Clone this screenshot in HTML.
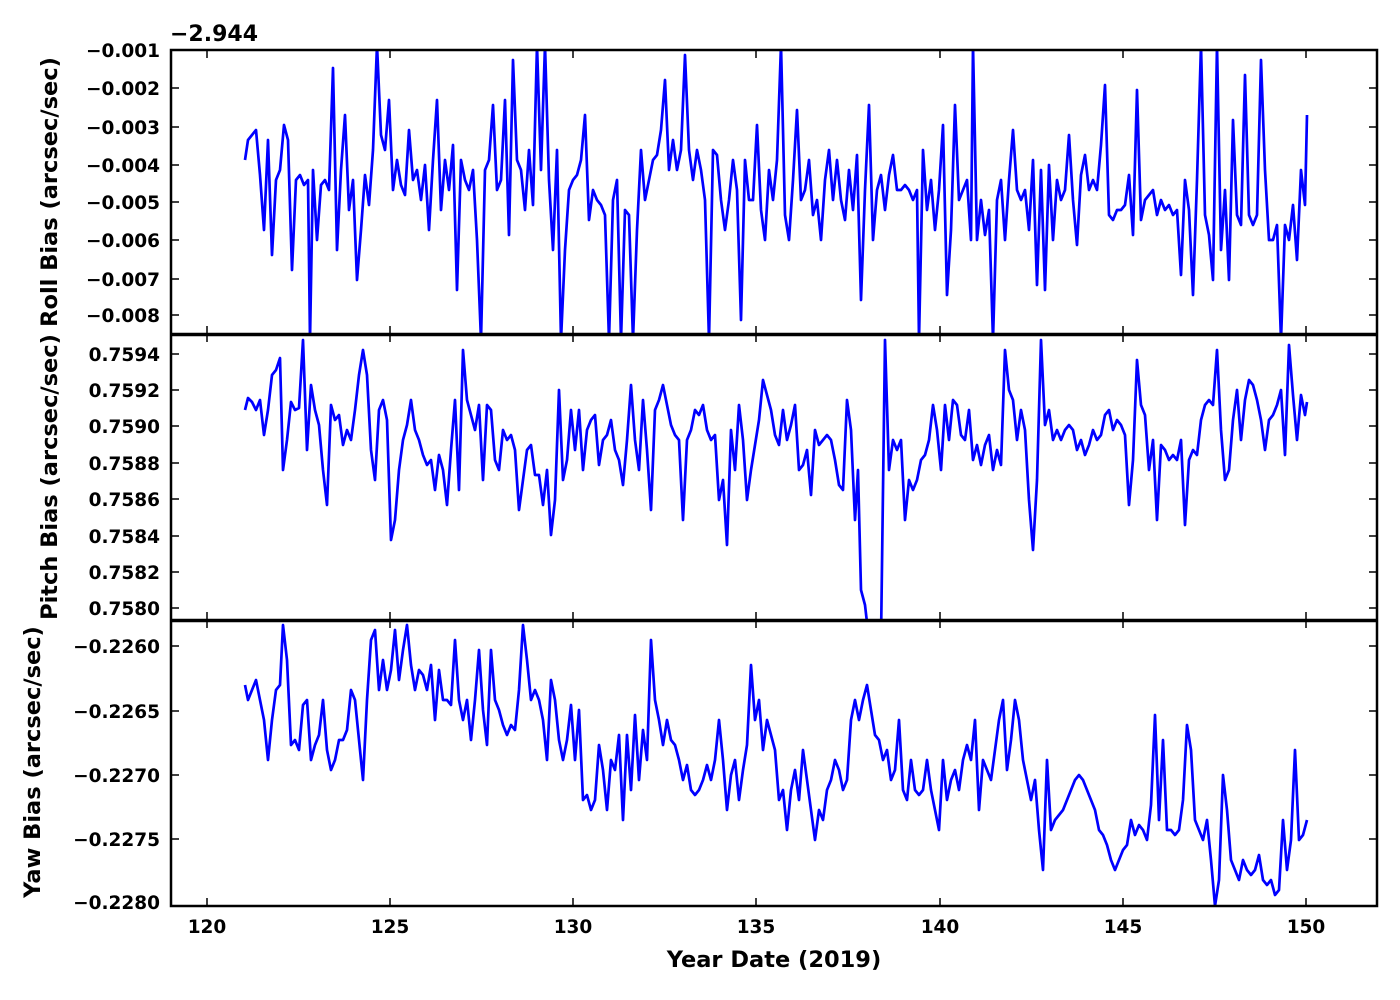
<!DOCTYPE html>
<html><head><meta charset="utf-8"><style>
html,body{margin:0;padding:0;background:#fff;}
svg{display:block;}
text{font-family:"DejaVu Sans","Liberation Sans",sans-serif;font-weight:bold;font-size:18.5px;fill:#000;}
.yl{text-anchor:end;}
.lab{font-size:22.5px;}
</style></head><body>
<svg width="1400" height="1000" viewBox="0 0 1400 1000">
<defs>
<clipPath id="c1"><rect x="171" y="50" width="1206" height="284"/></clipPath>
<clipPath id="c2"><rect x="171" y="335" width="1206" height="285"/></clipPath>
<clipPath id="c3"><rect x="171" y="621" width="1206" height="285"/></clipPath>
</defs>
<g fill="none" stroke="#0000ff" stroke-width="2.7" stroke-linejoin="round">
<polyline clip-path="url(#c1)" points="245,160 248,140 252,135 256,130 260,175 264,230 268,140 272,255 276,180 280,170 284,125 288,140 292,270 296,180 300,175 304,185 308,180 310,340 313,170 317,240 321,185 325,180 329,190 333,68 337,250 341,170 345,115 349,210 353,180 357,280 361,230 365,175 369,205 373,150 377,45 381,135 385,150 389,100 393,190 397,160 401,185 405,195 409,130 413,180 417,170 421,200 425,165 429,230 433,160 437,100 441,210 445,160 449,190 453,145 457,290 461,160 465,180 469,190 473,170 477,240 481,340 485,170 489,160 493,105 497,190 501,180 505,100 509,235 513,60 517,160 521,170 525,210 529,150 533,205 537,45 541,170 545,45 549,180 553,250 557,150 561,340 565,250 569,190 573,180 577,175 581,160 585,115 589,220 593,190 597,200 601,205 605,215 609,340 613,200 617,180 621,340 625,210 629,215 633,340 637,230 641,150 645,200 649,180 653,160 657,155 661,130 665,80 669,170 673,140 677,170 681,150 685,55 689,150 693,180 697,150 701,170 705,200 709,340 713,150 717,155 721,200 725,230 729,200 733,160 737,190 741,320 745,160 749,200 753,200 757,125 761,210 765,240 769,170 773,200 777,160 781,45 785,215 789,240 793,180 797,110 801,200 805,190 809,160 813,215 817,200 821,240 825,180 829,150 833,200 837,160 841,200 845,220 849,170 853,210 857,155 861,300 865,190 869,105 873,240 877,190 881,175 885,210 889,175 893,155 897,190 901,190 905,185 909,190 913,200 917,190 919,340 923,150 927,210 931,180 935,230 939,190 943,125 947,295 951,230 955,105 959,200 963,190 967,180 971,240 973,45 977,240 981,200 985,235 989,210 993,340 997,200 1001,180 1005,240 1009,180 1013,130 1017,190 1021,200 1025,190 1029,230 1033,160 1037,285 1041,170 1045,290 1049,165 1053,240 1057,180 1061,200 1065,190 1069,135 1073,200 1077,245 1081,175 1085,155 1089,190 1093,180 1097,190 1101,145 1105,85 1109,215 1113,220 1117,210 1121,210 1125,205 1129,175 1133,235 1137,90 1141,220 1145,200 1149,195 1153,190 1157,215 1161,200 1165,210 1169,205 1173,215 1177,210 1181,275 1185,180 1189,210 1193,295 1197,180 1201,45 1205,215 1209,235 1213,280 1217,45 1221,250 1225,190 1229,280 1233,120 1237,215 1241,225 1245,75 1249,215 1253,225 1257,215 1261,60 1265,170 1269,240 1273,240 1277,225 1281,340 1285,225 1289,240 1293,205 1297,260 1301,170 1305,205 1307,115"/>
<polyline clip-path="url(#c2)" points="245,410 248,398 252,402 256,410 260,400 264,435 268,410 272,375 276,370 280,358 283,470 287,440 291,402 295,410 299,408 303,340 307,450 311,385 315,410 319,425 323,470 327,505 331,405 335,420 339,415 343,445 347,430 351,440 355,410 359,375 363,350 367,375 371,450 375,480 379,410 383,400 387,420 391,540 395,520 399,470 403,440 407,425 411,400 415,430 419,440 423,455 427,465 431,460 435,490 439,455 443,470 447,505 451,450 455,400 459,490 463,350 467,400 471,415 475,430 479,405 483,480 487,405 491,410 495,460 499,470 503,430 507,440 511,435 515,450 519,510 523,480 527,450 531,445 535,475 539,475 543,505 547,470 551,535 555,500 559,390 563,480 567,460 571,410 575,450 579,410 583,470 587,430 591,420 595,415 599,465 603,440 607,435 611,420 615,450 619,460 623,485 627,440 631,385 635,440 639,470 643,400 647,450 651,510 655,410 659,400 663,385 667,405 671,425 675,435 679,440 683,520 687,440 691,430 695,410 699,415 703,405 707,430 711,440 715,435 719,500 723,480 727,545 731,430 735,470 739,405 743,440 747,500 751,470 755,445 759,420 763,380 767,395 771,410 775,435 779,445 783,410 787,440 791,425 795,405 799,470 803,465 807,450 811,495 815,430 819,445 823,440 827,435 831,440 835,460 839,485 843,490 847,400 851,430 855,520 858,470 861,590 865,605 869,640 873,640 877,640 881,640 885,340 889,470 893,440 897,450 901,440 905,520 909,480 913,490 917,480 921,460 925,455 929,440 933,405 937,430 941,470 945,405 949,440 953,400 957,405 961,435 965,440 969,410 973,460 977,445 981,465 985,445 989,435 993,470 997,450 1001,465 1005,350 1009,390 1013,400 1017,440 1021,410 1025,430 1029,500 1033,550 1037,480 1041,340 1045,425 1049,410 1053,440 1057,430 1061,440 1065,430 1069,425 1073,430 1077,450 1081,440 1085,455 1089,445 1093,430 1097,440 1101,435 1105,415 1109,410 1113,430 1117,420 1121,425 1125,435 1129,505 1133,460 1137,360 1141,405 1145,415 1149,470 1153,440 1157,520 1161,445 1165,450 1169,460 1173,455 1177,460 1181,440 1185,525 1189,460 1193,450 1197,455 1201,420 1205,405 1209,400 1213,405 1217,350 1221,430 1225,480 1229,470 1233,420 1237,390 1241,440 1245,400 1249,380 1253,385 1257,400 1261,420 1265,450 1269,420 1273,415 1277,405 1281,390 1285,455 1289,345 1293,395 1297,440 1301,395 1305,415 1307,402"/>
<polyline clip-path="url(#c3)" points="245,685 248,700 252,690 256,680 260,700 264,720 268,760 272,720 276,690 280,685 283,625 287,660 291,745 295,740 299,750 303,705 307,700 311,760 315,745 319,735 323,700 327,750 331,770 335,760 339,740 343,740 347,730 351,690 355,700 359,740 363,780 367,700 371,640 375,630 379,690 383,660 387,690 391,670 395,630 399,680 403,650 407,625 411,665 415,690 419,670 423,675 427,690 431,665 435,720 439,670 443,700 447,700 451,705 455,640 459,700 463,720 467,700 471,740 475,700 479,650 483,710 487,745 491,650 495,700 499,710 503,725 507,735 511,725 515,730 519,690 523,625 527,660 531,700 535,690 539,700 543,720 547,760 551,680 555,700 559,740 563,760 567,740 571,705 575,760 579,710 583,800 587,795 591,810 595,800 599,745 603,770 607,810 611,760 615,770 619,735 623,820 627,735 631,790 635,715 639,780 643,730 647,760 651,640 655,700 659,720 663,745 667,720 671,740 675,745 679,760 683,780 687,765 691,790 695,795 699,790 703,780 707,765 711,780 715,760 719,720 723,760 727,810 731,775 735,760 739,800 743,770 747,745 751,665 755,720 759,700 763,750 767,720 771,735 775,750 779,800 783,790 787,830 791,790 795,770 799,800 803,750 807,780 811,810 815,840 819,810 823,820 827,790 831,780 835,760 839,770 843,790 847,780 851,720 855,700 859,720 863,700 867,685 871,710 875,735 879,740 883,760 887,750 891,780 895,770 899,720 903,790 907,800 911,760 915,790 919,795 923,790 927,760 931,790 935,810 939,830 943,760 947,800 951,780 955,770 959,790 963,760 967,745 971,760 975,720 979,810 983,760 987,770 991,780 995,750 999,720 1003,700 1007,770 1011,740 1015,700 1019,720 1023,760 1027,780 1031,800 1035,780 1039,830 1043,870 1047,760 1051,830 1055,820 1059,815 1063,810 1067,800 1071,790 1075,780 1079,775 1083,780 1087,790 1091,800 1095,810 1099,830 1103,835 1107,845 1111,860 1115,870 1119,860 1123,850 1127,845 1131,820 1135,835 1139,825 1143,830 1147,840 1151,805 1155,715 1159,820 1163,740 1167,830 1171,830 1175,835 1179,830 1183,800 1187,725 1191,750 1195,820 1199,830 1203,840 1207,820 1211,860 1215,906 1219,880 1223,775 1227,810 1231,860 1235,870 1239,880 1243,860 1247,870 1251,875 1255,870 1259,855 1263,880 1267,885 1271,880 1275,895 1279,890 1283,820 1287,870 1291,840 1295,750 1299,840 1303,835 1307,820"/>
</g>
<g stroke="#000" fill="none">
<rect x="171" y="50" width="1206" height="856" stroke-width="2.5"/>
<line x1="171" y1="334.5" x2="1377" y2="334.5" stroke-width="3.5"/>
<line x1="171" y1="620.5" x2="1377" y2="620.5" stroke-width="3.5"/>
<g stroke-width="1.5">
<path d="M207,906v-8M390,906v-8M573,906v-8M756,906v-8M940,906v-8M1123,906v-8M1306,906v-8"/>
<path d="M207,620v-8M390,620v-8M573,620v-8M756,620v-8M940,620v-8M1123,620v-8M1306,620v-8M207,620v8M390,620v8M573,620v8M756,620v8M940,620v8M1123,620v8M1306,620v8"/>
<path d="M207,334v-8M390,334v-8M573,334v-8M756,334v-8M940,334v-8M1123,334v-8M1306,334v-8M207,334v8M390,334v8M573,334v8M756,334v8M940,334v8M1123,334v8M1306,334v8"/>
<path d="M207,50v8M390,50v8M573,50v8M756,50v8M940,50v8M1123,50v8M1306,50v8"/>
<path d="M171,88h8M171,127h8M171,165h8M171,202h8M171,240h8M171,279h8M171,315h8M1377,88h-8M1377,127h-8M1377,165h-8M1377,202h-8M1377,240h-8M1377,279h-8M1377,315h-8"/>
<path d="M171,354h8M171,390h8M171,426h8M171,463h8M171,499h8M171,536h8M171,572h8M171,608h8M1377,354h-8M1377,390h-8M1377,426h-8M1377,463h-8M1377,499h-8M1377,536h-8M1377,572h-8M1377,608h-8"/>
<path d="M171,646h8M171,711h8M171,775h8M171,839h8M1377,646h-8M1377,711h-8M1377,775h-8M1377,839h-8"/>
</g>
</g>
<text x="170" y="41" style="font-size:22px">−2.944</text>
<g class="yl">
<text x="160" y="57">−0.001</text><text x="160" y="95">−0.002</text><text x="160" y="134">−0.003</text><text x="160" y="172">−0.004</text><text x="160" y="209">−0.005</text><text x="160" y="247">−0.006</text><text x="160" y="286">−0.007</text><text x="160" y="322">−0.008</text>
<text x="160" y="361">0.7594</text><text x="160" y="397">0.7592</text><text x="160" y="433">0.7590</text><text x="160" y="470">0.7588</text><text x="160" y="506">0.7586</text><text x="160" y="543">0.7584</text><text x="160" y="579">0.7582</text><text x="160" y="615">0.7580</text>
<text x="160" y="653">−0.2260</text><text x="160" y="718">−0.2265</text><text x="160" y="782">−0.2270</text><text x="160" y="846">−0.2275</text><text x="160" y="909">−0.2280</text>
</g>
<g text-anchor="middle">
<text x="207" y="933">120</text><text x="390" y="933">125</text><text x="573" y="933">130</text><text x="756" y="933">135</text><text x="940" y="933">140</text><text x="1123" y="933">145</text><text x="1306" y="933">150</text>
<text class="lab" x="774" y="967">Year Date (2019)</text>
<text class="lab" transform="translate(57,192) rotate(-90)">Roll Bias (arcsec/sec)</text>
<text class="lab" transform="translate(57,477) rotate(-90)">Pitch Bias (arcsec/sec)</text>
<text class="lab" transform="translate(40,762) rotate(-90)">Yaw Bias (arcsec/sec)</text>
</g>
</svg>
</body></html>
